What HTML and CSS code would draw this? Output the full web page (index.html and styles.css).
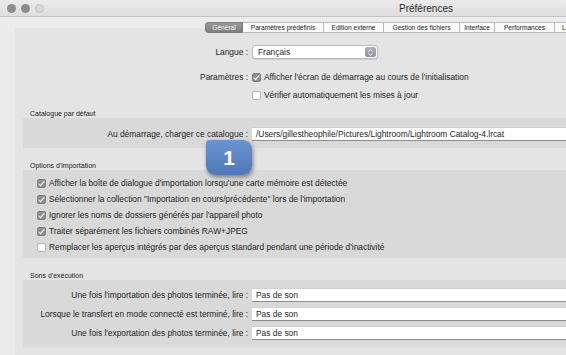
FILE: index.html
```html
<!DOCTYPE html>
<html lang="fr">
<head>
    <meta charset="UTF-8">
    <meta name="viewport" content="width=device-width, initial-scale=1.0">
    <title>Préférences</title>
    <link rel="stylesheet" href="styles.css">
</head>
<body>
    <div class="window">
        <div class="titlebar">
            <div class="lights">
                <span class="light"></span>
                <span class="light"></span>
                <span class="light off"></span>
            </div>
            <div class="title">Préférences</div>
        </div>

        <div class="main">
            <div class="tabs">
                <span class="tab active">Général</span>
                <span class="tab">Paramètres prédéfinis</span>
                <span class="tab">Edition externe</span>
                <span class="tab">Gestion des fichiers</span>
                <span class="tab">Interface</span>
                <span class="tab">Performances</span>
                <span class="tab">Lightroom mobile</span>
            </div>

            <div class="panel">
                <div class="top">
                    <div class="row">
                        <span class="label">Langue :</span>
                        <div class="select">
                            <span>Français</span>
                            <span class="stepper">
                                <svg width="7" height="9" viewBox="0 0 7 9"><path d="M1.5 3.5 L3.5 1.5 L5.5 3.5 M1.5 5.5 L3.5 7.5 L5.5 5.5" fill="none" stroke="#fff" stroke-width="1"/></svg>
                            </span>
                        </div>
                    </div>
                    <div class="row first-check">
                        <span class="label">Paramètres :</span>
                        <label class="check"><span class="box on"></span>Afficher l'écran de démarrage au cours de l'initialisation</label>
                    </div>
                    <div class="row second-check">
                        <span class="label"></span>
                        <label class="check"><span class="box"></span>Vérifier automatiquement les mises à jour</label>
                    </div>
                </div>

                <div class="group-title">Catalogue par défaut</div>
                <div class="group catalog">
                    <div class="row">
                        <span class="label">Au démarrage, charger ce catalogue :</span>
                        <div class="field">/Users/gillestheophile/Pictures/Lightroom/Lightroom Catalog-4.lrcat</div>
                    </div>
                </div>

                <div class="group-title">Options d'importation</div>
                <div class="group options">
                    <label class="check"><span class="box on"></span>Afficher la boîte de dialogue d'importation lorsqu'une carte mémoire est détectée</label>
                    <label class="check"><span class="box on"></span>Sélectionner la collection "Importation en cours/précédente" lors de l'importation</label>
                    <label class="check"><span class="box on"></span>Ignorer les noms de dossiers générés par l'appareil photo</label>
                    <label class="check"><span class="box on"></span>Traiter séparément les fichiers combinés RAW+JPEG</label>
                    <label class="check"><span class="box"></span>Remplacer les aperçus intégrés par des aperçus standard pendant une période d'inactivité</label>
                </div>

                <div class="group-title">Sons d'exécution</div>
                <div class="group sounds">
                    <div class="row">
                        <span class="label">Une fois l'importation des photos terminée, lire :</span>
                        <div class="field">Pas de son</div>
                    </div>
                    <div class="row">
                        <span class="label">Lorsque le transfert en mode connecté est terminé, lire :</span>
                        <div class="field">Pas de son</div>
                    </div>
                    <div class="row">
                        <span class="label">Une fois l'exportation des photos terminée, lire :</span>
                        <div class="field">Pas de son</div>
                    </div>
                </div>
            </div>
        </div>
    </div>

    <div class="badge">1</div>
</body>
</html>
```

FILE: styles.css
```css
* {
    padding: 0;
    margin: 0;
    box-sizing: border-box;
}
body {
    width: 566px;
    height: 355px;
    overflow: hidden;
    background-color: #ececec;
    font-family: 'Liberation Sans', Arial, sans-serif;
    font-size: 8.4px;
    color: #1e1e1e;
    position: relative;
}
.window {
    width: 852px;
    height: 355px;
    overflow: hidden;
}
.titlebar {
    height: 17px;
    background: linear-gradient(#ebebeb, #dedede);
    border-bottom: 1px solid #c4c4c4;
    display: flex;
    align-items: center;
}
.lights {
    display: flex;
    gap: 5px;
    padding-left: 7px;
}
.light {
    width: 9px;
    height: 9px;
    border-radius: 50%;
    background-color: #8d8d8d;
}
.light.off {
    background-color: #d8d8d8;
    border: 1px solid #c2c2c2;
}
.title {
    flex: 1;
    text-align: center;
    font-size: 10px;
    color: #2a2a2a;
    margin-right: 44px;
}

.main {
    padding-top: 5px;
}
.tabs {
    display: flex;
    margin-left: 205px;
    height: 11px;
    margin-bottom: -5px;
    position: relative;
    z-index: 1;
}
.tab {
    background-color: #fbfbfb;
    border: 1px solid #b9b9b9;
    border-left: none;
    font-size: 6.6px;
    line-height: 9px;
    text-align: center;
    color: #1a1a1a;
    white-space: nowrap;
}
.tab:nth-child(1) { width: 38px; }
.tab:nth-child(2) { width: 81px; }
.tab:nth-child(3) { width: 60px; }
.tab:nth-child(4) { width: 76px; }
.tab:nth-child(5) { width: 35px; }
.tab:nth-child(6) { width: 60px; }
.tab:nth-child(7) { width: 80px; text-align: left; padding-left: 7px; }
.tab.active {
    background: linear-gradient(#9a9a9a, #7f7f7f);
    color: #f4f4f4;
    border: 1px solid #7a7a7a;
    border-radius: 3px 0 0 3px;
}

.panel {
    margin-left: 15px;
    background-color: #e4e4e4;
    padding: 17px 0 0 8px;
    height: 327px;
}
.row {
    display: flex;
    align-items: center;
    gap: 4px;
    height: 14px;
}
.label {
    width: 225px;
    flex-shrink: 0;
    text-align: right;
    white-space: nowrap;
}
.first-check {
    margin-top: 11px;
}
.second-check {
    margin-top: 4px;
}

.select {
    width: 126px;
    height: 14px;
    background-color: #fff;
    border: 1px solid #b9b9b9;
    border-radius: 3px;
    display: flex;
    align-items: center;
    justify-content: space-between;
    padding-left: 5px;
    box-shadow: 0 1px 0 #cfcfcf;
}
.stepper {
    width: 11px;
    height: 10px;
    margin-right: 1px;
    border-radius: 2px;
    background: linear-gradient(#adb1b8, #8f949c);
    display: flex;
    align-items: center;
    justify-content: center;
}

.check {
    display: flex;
    align-items: center;
    gap: 3px;
    white-space: nowrap;
}
.box {
    width: 9px;
    height: 9px;
    border-radius: 2px;
    background-color: #fff;
    border: 1px solid #b3b3b3;
    flex-shrink: 0;
    position: relative;
}
.box.on {
    background-color: #8e8e8e;
    border-color: #808080;
}
.box.on::after {
    content: "";
    position: absolute;
    left: 2px;
    top: 0px;
    width: 2px;
    height: 5px;
    border-right: 1.3px solid #fff;
    border-bottom: 1.3px solid #fff;
    transform: rotate(40deg);
}

.group-title {
    font-size: 7px;
    line-height: 8px;
    height: 8px;
    padding-left: 7px;
    margin-top: 14px;
    color: #222;
}
.top + .group-title {
    margin-top: 8px;
}
.group {
    background-color: #d9d9d9;
}
.field {
    flex: 1;
    height: 14px;
    background-color: #fff;
    border-bottom: 1px solid #8d8d8d;
    border-top: 1px solid #d0d0d0;
    padding-left: 4px;
    line-height: 12px;
    white-space: nowrap;
}
.catalog {
    padding: 9px 0 7px;
}
.options {
    padding: 5px 0 3px 14px;
}
.options .check {
    height: 16px;
}
.sounds {
    padding: 8px 0 7px;
    display: flex;
    flex-direction: column;
    gap: 5px;
}

.badge {
    position: absolute;
    left: 206px;
    top: 140px;
    width: 46px;
    height: 35px;
    border-radius: 4px 9px 9px 9px;
    background: linear-gradient(#6b93d0, #4f78b8);
    color: #fff;
    font-size: 21px;
    font-weight: bold;
    display: flex;
    align-items: center;
    justify-content: center;
    box-shadow: 1px 2px 4px rgba(0, 0, 0, 0.45);
}
```
